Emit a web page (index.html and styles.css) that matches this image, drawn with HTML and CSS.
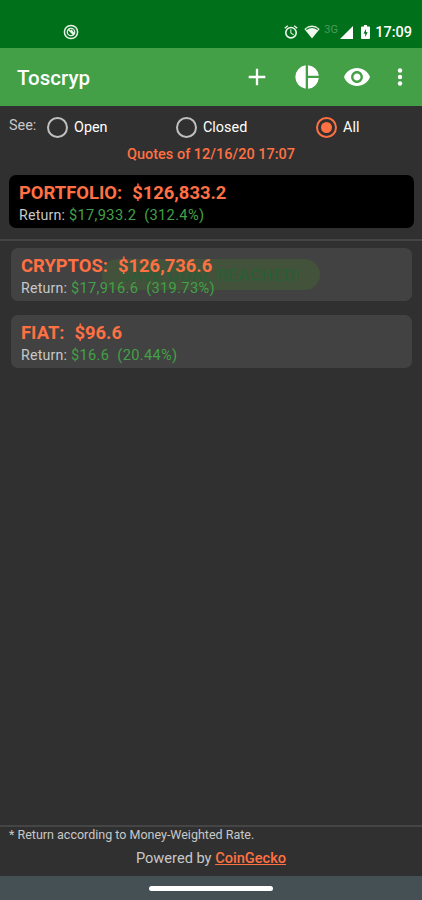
FILE: index.html
```
<!DOCTYPE html>
<html lang="en">
<head>
    <meta charset="UTF-8">
    <meta name="viewport" content="width=device-width, initial-scale=1.0">
    <title>Toscryp</title>
    <link rel="stylesheet" href="styles.css">
</head>
<body>
    <!-- Status bar -->
    <div class="status-bar">
        <svg class="app-icon" width="16" height="16" viewBox="0 0 16 16" fill="none" stroke="#eaf3ea">
            <circle cx="8" cy="8" r="6.6" stroke-width="1.5"/>
            <circle cx="8" cy="8" r="3.7" stroke-width="1.3"/>
            <path d="M5 5l6 6M8 6l3 4" stroke-width="1.7"/>
        </svg>
        <div class="status-icons">
            <svg class="alarm" width="14" height="14" viewBox="1.5 1.5 21 21" fill="#eef6ee">
                <path d="M22 5.72l-4.6-3.86-1.29 1.53 4.6 3.86zM7.88 3.39L6.6 1.86 2 5.71l1.29 1.53zM12.5 8H11v6l4.75 2.85.75-1.23-4-2.37zM12 4a9 9 0 1 0 0 18 9 9 0 0 0 0-18zm0 15.6a6.6 6.6 0 1 1 0-13.2 6.6 6.6 0 0 1 0 13.2z"/>
            </svg>
            <svg class="wifi" width="16" height="14" viewBox="0 0 16 14">
                <path d="M.3 4Q8-2.8 15.7 4L8 13.5z" fill="#eef6ee"/>
                <path d="M2.3 4.6Q8 .4 13.7 4.6" fill="none" stroke="#00701a" stroke-width="1.2"/>
            </svg>
            <span class="network">3G</span>
            <svg class="signal" width="13" height="13" viewBox="0 0 13 13"><path d="M13 0v13H0z" fill="#fff"/></svg>
            <svg class="battery" width="9" height="14" viewBox="0 0 9 14">
                <path d="M3 0h3v1.5h2q1 0 1 1V13q0 1-1 1H1q-1 0-1-1V2.5q0-1 1-1h2z" fill="#fff"/>
                <path d="M5 4L2.5 8.5h1.7V12L6.7 7.2H5z" fill="#00701a"/>
            </svg>
            <span class="clock">17:09</span>
        </div>
    </div>

    <!-- App bar -->
    <header>
        <h1>Toscryp</h1>
        <div class="actions">
            <svg class="add" width="18" height="18" viewBox="0 0 18 18"><path d="M9 .7v16.6M.7 9h16.6" stroke="#fff" stroke-width="2.3"/></svg>
            <svg class="chart" width="24" height="24" viewBox="0 0 24 24" fill="#fff">
                <path d="M10.7 .2v23.6A11.9 11.9 0 0 1 10.7.2zM13 .2A11.9 11.9 0 0 1 23.8 10.8H13zM13 13.1h10.8A11.9 11.9 0 0 1 13 23.8z"/>
            </svg>
            <svg class="eye" width="26" height="18" viewBox="1 4.5 22 15" preserveAspectRatio="none" fill="#fff">
                <path d="M12 4.5C7 4.5 2.73 7.61 1 12c1.73 4.39 6 7.5 11 7.5s9.27-3.11 11-7.5c-1.73-4.39-6-7.5-11-7.5zM12 17c-2.76 0-5-2.24-5-5s2.24-5 5-5 5 2.24 5 5-2.24 5-5 5zm0-8c-1.66 0-3 1.34-3 3s1.34 3 3 3 3-1.34 3-3-1.34-3-3-3z"/>
            </svg>
            <svg class="more" width="6" height="18" viewBox="0 0 6 18" fill="#fff">
                <circle cx="3" cy="2.5" r="2.2"/><circle cx="3" cy="9" r="2.2"/><circle cx="3" cy="15.5" r="2.2"/>
            </svg>
        </div>
    </header>

    <!-- Main -->
    <main>
        <div class="filter">
            <span class="see">See:</span>
            <label class="open"><span class="radio"></span><span>Open</span></label>
            <label class="closed"><span class="radio"></span><span>Closed</span></label>
            <label class="all"><span class="radio checked"></span><span>All</span></label>
        </div>
        <p class="quotes"><span>Quotes of 12/16/20 17:07</span></p>

        <section class="card portfolio">
            <h2><span>PORTFOLIO:</span><span>$126,833.2</span></h2>
            <p>Return: <span class="gain">$17,933.2&nbsp; (312.4%)</span></p>
        </section>

        <div class="groups">
            <section class="card cryptos">
                <div class="toast">SAVE GOAL REACHED!</div>
                <h2><span>CRYPTOS:</span><span>$126,736.6</span></h2>
                <p>Return: <span class="gain">$17,916.6&nbsp; (319.73%)</span></p>
            </section>
            <section class="card">
                <h2><span>FIAT:</span><span>$96.6</span></h2>
                <p>Return: <span class="gain">$16.6&nbsp; (20.44%)</span></p>
            </section>
        </div>
    </main>

    <!-- Footer -->
    <footer>
        <p class="note">* Return according to Money-Weighted Rate.</p>
        <p class="powered">Powered by <a href="#">CoinGecko</a></p>
    </footer>
    <div class="nav-bar"><span class="handle"></span></div>
</body>
</html>
```

FILE: styles.css
```
* {
    box-sizing: border-box;
}
body {
    display: flex;
    flex-direction: column;
    height: 900px;
    margin: 0;
    background-color: #303030;
    color: #c8c8c8;
    font-family: Roboto, "Liberation Sans", sans-serif;
    overflow: hidden;
}
h1, h2, p {
    margin: 0;
}
svg {
    display: block;
    flex: none;
}
.status-bar {
    display: flex;
    justify-content: space-between;
    height: 48px;
    padding: 24px 10px 0 63px;
    background-color: #00701a;
}
.status-icons {
    display: flex;
    align-items: flex-start;
    height: 16px;
}
.wifi {
    margin: 1px 0 0 6px;
}
.alarm {
    margin-top: 1px;
}
.network {
    width: 14px;
    margin-left: 4px;
    color: #4c9b5c;
    font-size: 11px;
    line-height: 12px;
}
.signal {
    margin: 2px 0 0 2px;
}
.battery {
    margin: 1px 0 0 8px;
}
.clock {
    margin-left: 5px;
    color: #fff;
    font-size: 14.5px;
    font-weight: 500;
    line-height: 17px;
}
header {
    display: flex;
    align-items: center;
    justify-content: space-between;
    height: 58px;
    padding: 0 19px 0 17px;
    background-color: #43a047;
    color: #fff;
}
h1 {
    padding-top: 2px;
    font-size: 20.5px;
    font-weight: 500;
}
.actions {
    display: flex;
    align-items: center;
}
.chart {
    margin-left: 29px;
}
.eye {
    margin-left: 25px;
}
.more {
    margin-left: 27px;
}
main {
    flex: 1;
}
.filter {
    display: grid;
    grid-template-columns: 38px 129px 140px 1fr;
    height: 39px;
    padding: 9px 9px 0;
    font-size: 14.4px;
}
.see {
    line-height: 21px;
}
label {
    display: flex;
    align-items: center;
    gap: 6px;
    height: 24px;
    color: #fff;
}
.radio {
    display: grid;
    place-items: center;
    width: 21px;
    height: 21px;
    border: 2px solid #c0c0c0;
    border-radius: 50%;
}
.checked {
    border-color: #ff7043;
}
.checked::after {
    content: "";
    width: 11px;
    height: 11px;
    border-radius: 50%;
    background-color: #ff7043;
}
.quotes {
    height: 30px;
    color: #ff7043;
    font-size: 14.5px;
    font-weight: 500;
    line-height: 19px;
    text-align: center;
}
.card {
    position: relative;
    height: 53px;
    padding: 7px 10px 5px;
    border-radius: 7px;
    background-color: #424242;
}
.card h2 {
    display: flex;
    gap: 10px;
    color: #ff7043;
    font-size: 18.4px;
    font-weight: 700;
    line-height: 22px;
}
.card p {
    font-size: 14.2px;
    letter-spacing: 0.2px;
    line-height: 22px;
}
.gain {
    color: #43a047;
    font-size: 14.6px;
    letter-spacing: 0.35px;
}
.portfolio {
    margin: 0 8px 0 9px;
    background-color: #000;
}
.groups {
    display: flex;
    flex-direction: column;
    gap: 14px;
    margin-top: 11px;
    padding: 7px 10px 0 11px;
    border-top: 2px solid #454545;
}
/* Fading goal notification behind the crypto totals */
.toast {
    position: absolute;
    top: 11px;
    left: 91px;
    width: 218px;
    height: 31px;
    border-radius: 16px;
    background-color: #43523b;
    color: #2b5e36;
    font-size: 17px;
    font-weight: 500;
    letter-spacing: 0.4px;
    line-height: 32px;
    text-align: right;
    white-space: nowrap;
    padding-right: 20px;
}
.cryptos h2, .cryptos p {
    position: relative;
}
footer {
    height: 51px;
    border-top: 2px solid #454545;
}
.note {
    padding-left: 9px;
    font-size: 12.5px;
    line-height: 16px;
}
.powered {
    padding-top: 5px;
    font-size: 14.6px;
    line-height: 20px;
    text-align: center;
}
.powered a {
    color: #ff7043;
    font-weight: 500;
}
.nav-bar {
    display: flex;
    justify-content: center;
    height: 24px;
    padding-top: 10px;
    background-color: #455054;
}
.handle {
    width: 124px;
    height: 5px;
    border-radius: 3px;
    background-color: #fff;
}
```
